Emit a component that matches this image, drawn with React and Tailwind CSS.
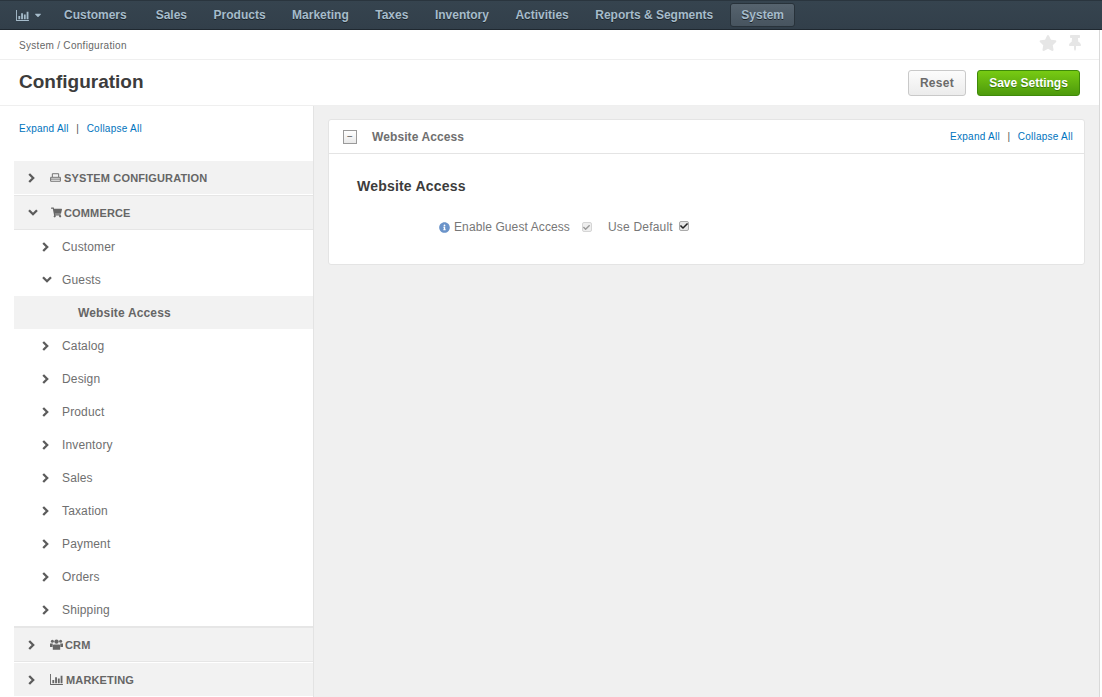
import { FaShoppingCart, FaInfoCircle, FaStar, FaThumbtack, FaCheck, FaCaretDown } from "react-icons/fa";

const navItems = ["Customers", "Sales", "Products", "Marketing", "Taxes", "Inventory", "Activities", "Reports & Segments"];
const commerceAfter = ["Catalog", "Design", "Product", "Inventory", "Sales", "Taxation", "Payment", "Orders", "Shipping"];

function BarChart({ className }) {
    return (
        <svg viewBox="0 0 14 12" className={className} fill="currentColor">
            <path d="M0 0h1v11h13v1H0z" />
            <path d="M2.5 6.5h2V10h-2zM5.5 3.5h2V10h-2zM8.5 5h2v5h-2zM11.5 2h2v8h-2z" />
        </svg>
    );
}

function PrinterIcon({ className }) {
    return (
        <svg viewBox="0 0 12 10" className={className} fill="none" stroke="currentColor" strokeWidth="1">
            <path d="M2.5 4.5V.8h7v3.7" />
            <path d="M.6 4.8h10.8v4.4H.6z" />
            <path d="M.6 6.8h10.8" />
        </svg>
    );
}

function GroupIcon({ className }) {
    return (
        <svg viewBox="0 0 13 11" className={className} fill="currentColor">
            <circle cx="2.4" cy="2.2" r="1.5" />
            <circle cx="10.6" cy="2.2" r="1.5" />
            <circle cx="6.5" cy="2.6" r="2.2" />
            <path d="M0 4.6h2.8L2.6 8H0zM13 4.6h-2.8l.2 3.4H13z" />
            <path d="M3.4 5.4h6.2l.6 1v4.4H2.8V6.4z" />
        </svg>
    );
}

function Chevron({ open }) {
    if (open) {
        return (
            <svg viewBox="0 0 10 7" className="w-[10px] h-[7px]" fill="none" stroke="#5c5c5c" strokeWidth="2.3">
                <path d="M1 1.2l4 4 4-4" />
            </svg>
        );
    }
    return (
        <svg viewBox="0 0 7 10" className="w-[7px] h-[10px]" fill="none" stroke="#5c5c5c" strokeWidth="2.3">
            <path d="M1.2 1l4 4-4 4" />
        </svg>
    );
}

function SectionRow({ open, icon, label }) {
    return (
        <div className="h-[33px] bg-[#f2f2f2] flex items-center text-[#666] font-bold text-[11px]">
            <span className="w-[36px] pl-[14px] flex">
                <Chevron open={open} />
            </span>
            {icon}
            <span className="pt-[1px] tracking-[0.15px]">{label}</span>
        </div>
    );
}

function TreeRow({ open, label }) {
    return (
        <div className="h-[33px] flex items-center text-[12px] tracking-[0.15px] text-[#6f6f6f]">
            <span className="w-[48px] pl-[28px] flex">
                <Chevron open={open} />
            </span>
            <span>{label}</span>
        </div>
    );
}

function ExpandLinks({ className }) {
    return (
        <div className={"flex items-center text-[10px] tracking-[0.25px] text-[#0073bd] " + className}>
            <span>Expand All</span>
            <span className="mx-[7.5px] text-[#555]">|</span>
            <span>Collapse All</span>
        </div>
    );
}

export default function App() {
    return (
        <div className="h-[697px] overflow-hidden flex flex-col bg-white font-['Liberation_Sans',Arial,sans-serif]">
            {/* top bar */}
            <div className="h-[30px] shrink-0 flex items-center bg-gradient-to-b from-[#36444f] to-[#323f4a] border-t border-t-[#2a353e] border-b border-b-[#1f2830] text-[#a6bccb] text-[12px] font-bold [text-shadow:0_1px_0_#1c2429]">
                <div className="w-[64px] pl-[16px] flex items-center gap-[4px]">
                    <BarChart className="w-[13px] h-[11px]" />
                    <FaCaretDown className="text-[10px]" />
                </div>
                <nav className="flex items-center">
                    {navItems.map((item) => (
                        <span key={item} className="mr-[26.5px] first:mr-[29px]">{item}</span>
                    ))}
                </nav>
                <span className="ml-[-9.5px] h-[24px] px-[10px] flex items-center rounded-[3px] bg-gradient-to-b from-[#56636e] to-[#47545f] border border-[#28323a]">System</span>
            </div>

            <div className="flex-1 min-h-0 flex border-r border-r-[#d9d9d9] mr-[2px]">
                <div className="flex-1 min-w-0 flex flex-col">
                    {/* breadcrumbs */}
                    <div className="h-[30px] shrink-0 flex items-center justify-between pl-[19px] pr-[16px] border-b border-b-[#efefef] text-[10px] tracking-[0.3px] text-[#666]">
                        <span className="pt-[1px]">System / Configuration</span>
                        <div className="mt-[-4px] flex items-center gap-[10px] text-[#e6e6e6]">
                            <FaStar className="text-[18px]" />
                            <FaThumbtack className="text-[16px]" />
                        </div>
                    </div>

                    {/* page title */}
                    <div className="h-[46px] shrink-0 flex items-center justify-between pl-[19px] pr-[19px] border-b border-b-[#efefef]">
                        <h1 className="text-[19px] font-bold text-[#3c3c3c]">Configuration</h1>
                        <div className="flex items-center gap-[11px]">
                            <button className="h-[26px] w-[58px] rounded-[3px] border border-[#c9c9c9] bg-gradient-to-b from-[#fcfcfc] to-[#ececec] text-[12px] font-bold tracking-[0.3px] text-[#6b6b6b]">Reset</button>
                            <button className="h-[26px] w-[103px] rounded-[3px] border border-[#3f8a0a] bg-gradient-to-b from-[#78cb13] to-[#4d9a0c] text-[12px] font-bold text-white [text-shadow:0_1px_0_#3a7a08]">Save Settings</button>
                        </div>
                    </div>

                    <div className="flex-1 min-h-0 flex">
                        {/* sidebar */}
                        <div className="w-[314px] shrink-0 border-r border-r-[#e3e3e3] pl-[14px] overflow-hidden">
                            <ExpandLinks className="pl-[5px] pt-[17px] h-[55px] items-start leading-[12px]" />
                            <SectionRow icon={<PrinterIcon className="w-[11px] h-[9px] mr-[3px]" />} label="SYSTEM CONFIGURATION" />
                            <div className="mt-[1px] border-t border-t-[#e6e6e6]" />
                            <SectionRow open icon={<FaShoppingCart className="ml-[1px] mr-[2px] text-[11px]" />} label="COMMERCE" />
                            <div className="border-t border-t-[#e6e6e6]" />
                            <TreeRow label="Customer" />
                            <TreeRow open label="Guests" />
                            <div className="h-[33px] bg-[#f2f2f2] flex items-center pl-[64px] text-[12px] tracking-[0.15px] font-bold text-[#666]">Website Access</div>
                            {commerceAfter.map((item) => <TreeRow key={item} label={item} />)}
                            <div className="border-t-2 border-t-[#e6e6e6]" />
                            <SectionRow icon={<GroupIcon className="w-[13px] h-[11px] mr-[2px]" />} label="CRM" />
                            <div className="h-[2px] border-t border-t-[#e6e6e6]" />
                            <SectionRow icon={<BarChart className="w-[13px] h-[11px] mr-[3px]" />} label="MARKETING" />
                        </div>

                        {/* main content */}
                        <div className="flex-1 min-w-0 bg-[#f0f0f0] pt-[13px] pl-[14px] pr-[14px]">
                            <div className="h-[146px] bg-white rounded-[3px] border border-[#e4e4e4]">
                                <div className="h-[34px] flex items-center border-b border-b-[#e4e4e4] pl-[14px] pr-[11px]">
                                    <span className="w-[14px] h-[14px] border border-[#9a9a9a] bg-gradient-to-b from-white to-[#e9e9e9] flex items-center justify-center text-[10px] leading-none text-[#555]">−</span>
                                    <span className="ml-[15px] text-[12px] tracking-[0.1px] font-bold text-[#6f6f6f]">Website Access</span>
                                    <ExpandLinks className="ml-auto" />
                                </div>
                                <div className="pl-[28px]">
                                    <h2 className="mt-[24px] text-[14px] tracking-[0.2px] leading-[16px] font-bold text-[#3c3c3c]">Website Access</h2>
                                    <div className="mt-[24px] flex items-center pl-[82px] text-[12px] tracking-[0.1px] text-[#777]">
                                        <FaInfoCircle className="text-[11px] text-[#6a93c9] mr-[4px]" />
                                        <span>Enable Guest Access</span>
                                        <span className="ml-[12px] w-[10px] h-[10px] rounded-[2px] border border-[#d5d5d5] bg-[#eee] flex items-center justify-center text-[#999]"><FaCheck className="text-[7px]" /></span>
                                        <span className="ml-[16px] tracking-[0.2px]">Use Default</span>
                                        <span className="ml-[6px] w-[10px] h-[10px] rounded-[2px] border border-[#aaa] bg-[#e5e5e5] flex items-center justify-center text-[#222] mt-[-2px]"><FaCheck className="text-[8px]" /></span>
                                    </div>
                                </div>
                            </div>
                        </div>
                    </div>
                </div>
            </div>
        </div>
    );
}
